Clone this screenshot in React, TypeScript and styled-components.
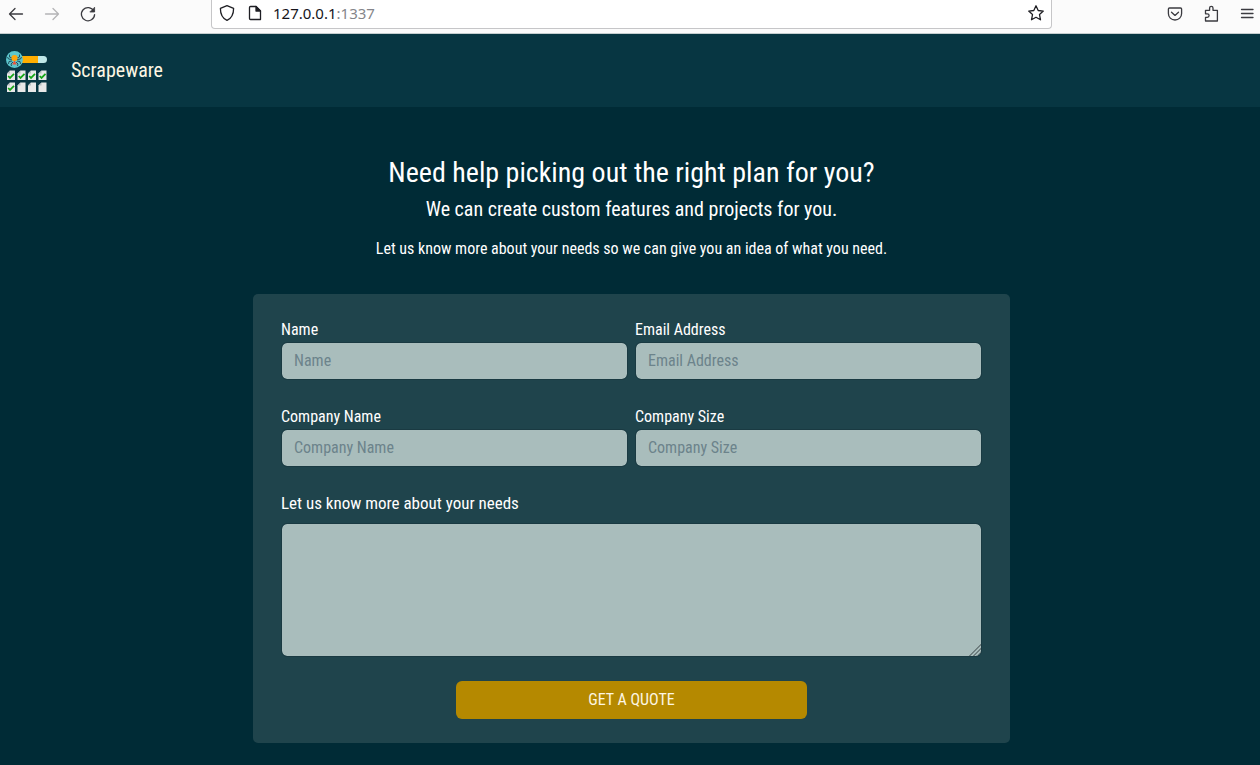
import React from "react";
import styled, { createGlobalStyle } from "styled-components";

const GlobalStyle = createGlobalStyle`
  *, *::before, *::after { box-sizing: border-box; }
  body {
    margin: 0;
    background: #002b36;
    color: #fdf6e3;
    font-family: "Roboto Condensed", "Liberation Sans Narrow", Roboto, sans-serif;
    font-size: 16px;
    line-height: 24px;
  }
  h1, h2, p { margin: 0; font-weight: 400; color: #fff; }
  input, textarea, button { font: inherit; }
`;

const BrowserBar = styled.div`
  display: flex;
  align-items: flex-start;
  height: 34px;
  background: #fbfbfb;
  border-bottom: 1px solid #c5cecf;
`;

const BarGroup = styled.div<{ $end?: boolean }>`
  display: flex;
  flex: none;
  align-items: center;
  justify-content: ${(p) => (p.$end ? "flex-end" : "flex-start")};
  gap: 16px;
  width: ${(p) => (p.$end ? 208 : 211)}px;
  height: 27px;
  padding: ${(p) => (p.$end ? "0 3px 0 0" : "0 0 0 6px")};
`;

const IconButton = styled.button<{ $faded?: boolean }>`
  display: flex;
  flex: none;
  padding: 0;
  border: 0;
  background: none;
  color: ${(p) => (p.$faded ? "#b4b4b6" : "#3b3b40")};
`;

const AddressBar = styled.div`
  display: flex;
  flex: 1;
  align-items: center;
  gap: 8px;
  min-width: 0;
  height: 29px;
  padding: 0 5px 2px;
  background: #fff;
  border: 1px solid #c6c6c8;
  border-top: 0;
  border-radius: 0 0 4px 4px;
  ${IconButton} { color: #1f1f24; }
`;

const Address = styled.span`
  flex: 1;
  color: #15141a;
  font-family: "Noto Sans", sans-serif;
  font-size: 15px;
`;

const Port = styled.span`
  color: #85858a;
`;

const SiteHeader = styled.header`
  display: flex;
  align-items: center;
  gap: 24px;
  height: 73px;
  padding: 0 6px;
  background: #073642;
`;

const Brand = styled.a`
  padding-bottom: 2px;
  color: #fdf6e3;
  font-size: 20px;
  text-decoration: none;
`;

const Main = styled.main`
  display: flex;
  flex-direction: column;
  align-items: center;
  padding: 49px 0 22px 3px;
  text-align: center;
`;

const Title = styled.h1`
  font-size: 28px;
  line-height: 34px;
`;

const Subtitle = styled.h2`
  margin-top: 7px;
  font-size: 20px;
`;

const Intro = styled.p`
  margin-top: 16px;
`;

const QuoteForm = styled.form`
  display: flex;
  flex-direction: column;
  gap: 24px;
  width: 100%;
  max-width: 757px;
  margin-top: 33px;
  padding: 24px 28px;
  background: #1f444c;
  border-radius: 5px;
  text-align: left;
`;

const FieldGrid = styled.div`
  display: grid;
  grid-template-columns: 1fr 1fr;
  gap: 25px 7px;
`;

const Field = styled.div<{ $spaced?: boolean }>`
  display: flex;
  flex-direction: column;
  gap: ${(p) => (p.$spaced ? 8 : 0)}px;
`;

const Label = styled.label<{ $large?: boolean }>`
  color: #fff;
  font-size: ${(p) => (p.$large ? 17 : 16)}px;
`;

const TextInput = styled.input`
  width: 100%;
  height: 38px;
  padding: 5px 12px 7px;
  background: #a9bdbc;
  background-clip: padding-box;
  border: 1px solid #1a3a42;
  border-radius: 6px;
  color: #073642;
  &::placeholder { color: #6c838b; opacity: 1; }
`;

const TextArea = styled(TextInput).attrs({ as: "textarea" })`
  display: block;
  height: 134px;
  resize: vertical;
  &::-webkit-resizer {
    background: linear-gradient(
      135deg,
      transparent 60%, #6f7e7f 60%, #6f7e7f 65%,
      transparent 65%, transparent 72%, #6f7e7f 72%, #6f7e7f 77%,
      transparent 77%, transparent 84%, #6f7e7f 84%, #6f7e7f 89%,
      transparent 89%
    );
  }
`;

const SubmitButton = styled.button`
  align-self: center;
  width: 50%;
  height: 38px;
  background: #b58900;
  border: 0;
  border-radius: 6px;
  color: #fdf6e3;
  text-transform: uppercase;
`;

const Icon = ({ size = 20, children }: { size?: number; children: React.ReactNode }) => (
  <svg width={size} height={size} viewBox="0 0 20 20" fill="none" stroke="currentColor" strokeWidth="1.3" strokeLinecap="round" strokeLinejoin="round" aria-hidden="true">
    {children}
  </svg>
);

const SheetMark = ({ x, y, checked }: { x: number; y: number; checked: boolean }) => (
  <g transform={`translate(${x} ${y})`}>
    <path d="M3 0H8V9.4H0V3Z" fill="#e8e8e8" />
    <path d="M3 0V3H0Z" fill="#b9bfc1" />
    {checked && <path d="M1.2 5.4L3 7.3L7 3.2" fill="none" stroke="#16a616" strokeWidth="1.7" />}
  </g>
);

const Logo = () => (
  <svg width="41" height="44" viewBox="0 -2 41 44" role="img" aria-label="Scrapeware logo">
    <rect x="14" y="5" width="19" height="7" fill="#ffae00" />
    <path d="M32 5H37.5A3.5 3.5 0 0 1 37.5 12H32Z" fill="#bfe8e8" />
    <circle cx="8.5" cy="8.5" r="8.5" fill="#5cc6cc" />
    <g fill="none" stroke="#1c4653" strokeWidth="0.9">
      <path d="M6 7L3.5 6L3.5 3.5M6 8.5L2.5 8L1.5 6M6 10L3 10.5L2.5 13M7 11L5 13L5.5 15" />
      <path d="M11 7L13.5 6L13.5 3.5M11 8.5L14.5 8L15.5 6M11 10L14 10.5L14.5 13M10 11L12 13L11.5 15" />
    </g>
    <circle cx="8.5" cy="7" r="3.1" fill="#ffa50a" />
    <path d="M8.5 9.5L10.8 13.5H6.2Z" fill="#e8533c" />
    {[0, 1, 2, 3].map((i) => <SheetMark key={i} x={1 + i * 10.5} y={19.6} checked />)}
    {[0, 1, 2, 3].map((i) => <SheetMark key={i} x={1 + i * 10.5} y={31.6} checked={i === 0} />)}
  </svg>
);

const fields = [
  { id: "name", label: "Name", type: "text" },
  { id: "email", label: "Email Address", type: "email" },
  { id: "company", label: "Company Name", type: "text" },
  { id: "size", label: "Company Size", type: "text" },
];

export default function App() {
  return (
    <>
      <GlobalStyle />
      <BrowserBar>
        <BarGroup>
          <IconButton aria-label="Back"><Icon><path d="M16.5 10H3.5M9 4.5L3.5 10L9 15.5" /></Icon></IconButton>
          <IconButton aria-label="Forward" $faded><Icon><path d="M3.5 10H16.5M11 4.5L16.5 10L11 15.5" /></Icon></IconButton>
          <IconButton aria-label="Reload">
            <Icon>
              <path d="M15.8 7A6.6 6.6 0 1 0 16.6 10.6" />
              <path d="M16.6 3.6V8H12.2Z" fill="currentColor" strokeWidth="0.8" />
            </Icon>
          </IconButton>
        </BarGroup>
        <AddressBar>
          <IconButton aria-label="Tracking protection">
            <Icon><path d="M10 2.7L16.6 5.4C16.6 11 14.3 15.3 10 17.4C5.7 15.3 3.4 11 3.4 5.4Z" /></Icon>
          </IconButton>
          <IconButton aria-label="Site information">
            <Icon>
              <path d="M5.5 3.5H11L15.5 8V16.5H5.5C4.9 16.5 4.5 16.1 4.5 15.5V4.5C4.5 3.9 4.9 3.5 5.5 3.5Z" />
              <path d="M11 3.5V8H15.5Z" fill="currentColor" />
            </Icon>
          </IconButton>
          <Address>127.0.0.1<Port>:1337</Port></Address>
          <IconButton aria-label="Bookmark">
            <Icon><path d="M10 2.8L12.2 7.5L17.3 8.1L13.5 11.6L14.5 16.8L10 14.3L5.5 16.8L6.5 11.6L2.7 8.1L7.8 7.5Z" /></Icon>
          </IconButton>
        </AddressBar>
        <BarGroup $end>
          <IconButton aria-label="Save to Pocket">
            <Icon>
              <path d="M4.5 4H15.5C16.2 4 16.6 4.4 16.6 5V9.4C16.6 13.2 13.8 16 10 16S3.4 13.2 3.4 9.4V5C3.4 4.4 3.8 4 4.5 4Z" />
              <path d="M6.5 8.2L10 11.4L13.5 8.2" />
            </Icon>
          </IconButton>
          <IconButton aria-label="Extensions">
            <Icon>
              <path d="M4.5 17V13.4H6.3A1.8 1.8 0 0 0 6.3 9.8H4.5V6.3H8.6V4.1A1.7 1.7 0 0 1 12 4.1V6.3H16.4V17Z" />
            </Icon>
          </IconButton>
          <IconButton aria-label="Menu"><Icon><path d="M4.5 5.5H16M4.5 9.5H16M4.5 13.5H16" /></Icon></IconButton>
        </BarGroup>
      </BrowserBar>
      <SiteHeader>
        <Logo />
        <Brand href="#">Scrapeware</Brand>
      </SiteHeader>
      <Main>
        <Title>Need help picking out the right plan for you?</Title>
        <Subtitle>We can create custom features and projects for you.</Subtitle>
        <Intro>Let us know more about your needs so we can give you an idea of what you need.</Intro>
        <QuoteForm onSubmit={(e) => e.preventDefault()}>
          <FieldGrid>
            {fields.map((f) => (
              <Field key={f.id}>
                <Label htmlFor={f.id}>{f.label}</Label>
                <TextInput id={f.id} type={f.type} placeholder={f.label} />
              </Field>
            ))}
          </FieldGrid>
          <Field $spaced>
            <Label htmlFor="needs" $large>Let us know more about your needs</Label>
            <TextArea id="needs" />
          </Field>
          <SubmitButton type="submit">Get a quote</SubmitButton>
        </QuoteForm>
      </Main>
    </>
  );
}
